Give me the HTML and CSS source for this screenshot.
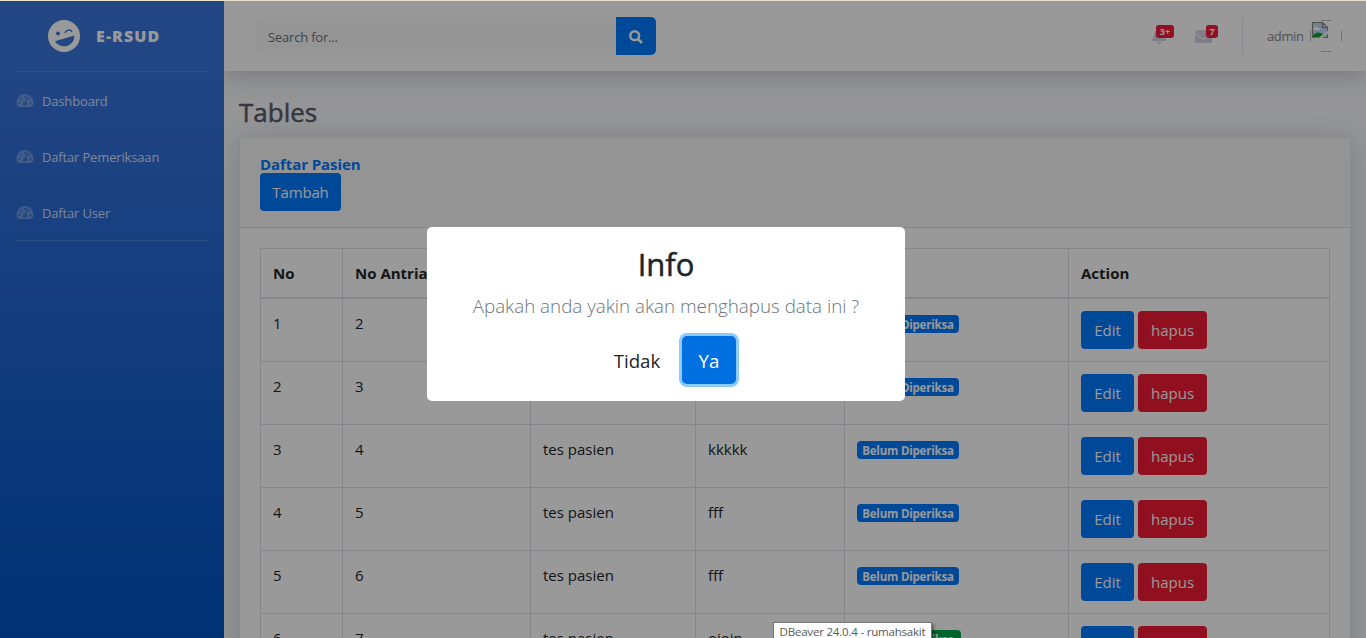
FILE: index.html
```html
<!DOCTYPE html>
<html lang="id">
<head>
<meta charset="utf-8">
<title>E-RSUD - Tables</title>
<link rel="stylesheet" href="styles.css">
</head>
<body>
<svg class="defs" width="0" height="0">
  <symbol id="gauge" viewBox="0 0 576 512"><path fill-rule="evenodd" d="M288 32C128.940 32 0 160.940 0 320c0 52.800 14.250 102.260 39.060 144.800 5.610 9.620 16.300 15.200 27.440 15.200h443c11.140 0 21.830-5.580 27.440-15.200C561.750 422.260 576 372.800 576 320c0-159.060-128.940-288-288-288zm0 64c14.710 0 26.580 10.130 30.320 23.650-1.110 2.260-2.640 4.230-3.450 6.670l-9.220 27.670c-5.130 3.490-10.970 6.010-17.640 6.010-17.670 0-32-14.330-32-32S270.330 96 288 96zM96 384c-17.670 0-32-14.330-32-32s14.330-32 32-32 32 14.330 32 32-14.330 32-32 32zm48-160c-17.670 0-32-14.330-32-32s14.330-32 32-32 32 14.330 32 32-14.330 32-32 32zm246.770-72.410l-61.330 184C343.130 347.330 352 364.540 352 384c0 11.720-3.380 22.550-8.880 32H232.880c-5.500-9.450-8.880-20.280-8.880-32 0-33.940 26.500-61.430 59.900-63.590l61.340-184.010c4.170-12.560 17.730-19.450 30.360-15.170 12.570 4.190 19.350 17.790 15.170 30.360zm14.660 57.200l15.520-46.550c3.470-1.290 7.130-2.230 11.050-2.230 17.670 0 32 14.330 32 32s-14.330 32-32 32c-11.380-.010-20.890-6.280-26.570-15.220zM480 384c-17.670 0-32-14.330-32-32s14.330-32 32-32 32 14.330 32 32-14.330 32-32 32z"/></symbol>
</svg>
<div class="page">
  <aside class="sidebar">
    <a class="brand">
      <svg class="brand-icon" viewBox="0 0 32 32"><circle cx="16" cy="16" r="16" fill="currentColor"/><circle cx="10" cy="13.400" r="2" fill="#3a75dc"/><path d="M17.200 12.400c.7-2.500 4.900-3.200 6.500-1" fill="none" stroke="#3a75dc" stroke-width="1.500" stroke-linecap="round"/><path d="M7.800 20.900 25 15.900c.9-.2 1.200.4 1.200 1.100-.3 4-2.900 7.700-7.200 8.900-4.600 1.200-9.200-.7-11.600-3.900-.4-.6-.1-1 .4-1.100z" fill="#3a75dc"/></svg>
      <span class="brand-text">E-RSUD</span>
    </a>
    <hr class="divider">
    <nav class="nav">
      <a class="nav-link"><svg><use href="#gauge"/></svg><span>Dashboard</span></a>
      <a class="nav-link"><svg><use href="#gauge"/></svg><span>Daftar Pemeriksaan</span></a>
      <a class="nav-link"><svg><use href="#gauge"/></svg><span>Daftar User</span></a>
    </nav>
    <hr class="divider">
  </aside>
  <div class="content">
    <header class="topbar">
      <div class="search"><div class="search-input">Search for...</div><div class="search-btn"><svg viewBox="0 0 14 14"><circle cx="5.700" cy="5.700" r="4.400"/><path d="m9 9 4 4"/></svg></div></div>
      <div class="tools">
        <div class="tool bell"><svg viewBox="0 0 448 512"><path d="M224 512c35.320 0 63.970-28.650 63.970-64H160.030c0 35.350 28.650 64 63.970 64zm215.390-149.710c-19.320-20.760-55.470-51.990-55.470-154.290 0-77.700-54.480-139.900-127.940-155.160V32c0-17.670-14.320-32-31.980-32s-31.980 14.330-31.980 32v20.840C118.560 68.100 64.080 130.300 64.080 208c0 102.300-36.150 133.530-55.470 154.290-6 6.450-8.660 14.160-8.610 21.710.110 16.400 12.980 32 32.100 32h383.800c19.120 0 32-15.600 32.100-32 .050-7.550-2.610-15.270-8.610-21.710z"/></svg><b>3+</b></div>
        <div class="tool mail"><svg viewBox="0 0 512 512"><path d="M502.300 190.800c3.900-3.100 9.700-.2 9.700 4.700V400c0 26.500-21.500 48-48 48H48c-26.500 0-48-21.500-48-48V195.600c0-5 5.700-7.800 9.700-4.700 22.400 17.400 52.100 39.500 154.100 113.600 21.100 15.400 56.700 47.800 92.200 47.600 35.700.3 72-32.800 92.300-47.600 102-74.100 131.600-96.300 154-113.700zM256 320c23.200.4 56.600-29.200 73.400-41.400 132.700-96.300 142.800-104.700 173.400-128.700 5.800-4.500 9.200-11.500 9.200-18.900v-19c0-26.500-21.500-48-48-48H48c-26.500 0-48 21.500-48 48v19c0 7.400 3.400 14.300 9.200 18.900 30.600 23.900 40.700 32.400 173.400 128.700 16.800 12.200 50.200 41.800 73.400 41.400z"/></svg><b>7</b></div>
        <span class="vline"></span>
        <span class="user">admin</span>
        <svg class="avatar" viewBox="0 0 32 32"><path d="M11 .5q5-.8 10 0M11 31.500q5 .8 10 0M.5 11q-.8 5 0 10M31.500 11q.8 5 0 10" fill="none" stroke="#aaa"/><path d="M2 2.500h11l5 5v10H2z" fill="#c3d9f5"/><path d="M2 17.500c2-6 8-6 11-3l-3 3z" fill="#12a030"/><path d="M4 8q2-3 4 0h2v2H3z" fill="#fff"/><path d="M2.500 17.500v-15h10l5 5v3M12.500 2.500v5h5M13 17.500h4.500v-3" fill="none" stroke="#858585" stroke-width="1.200"/><path d="m10 18 8-6" stroke="#fff" stroke-width="2"/></svg>
      </div>
    </header>
    <main class="main">
      <h1>Tables</h1>
      <section class="card">
        <div class="card-head"><h6>Daftar Pasien</h6><a class="btn blue add">Tambah</a></div>
        <div class="card-body">
          <table>
            <colgroup><col class="c1"><col class="c2"><col class="c3"><col class="c4"><col class="c5"><col class="c6"></colgroup>
            <thead><tr><th>No</th><th>No Antrian</th><th></th><th></th><th></th><th>Action</th></tr></thead>
            <tbody>
              <tr><td>1</td><td>2</td><td></td><td></td><td><span class="badge">Belum Diperiksa</span></td><td><div class="actions"><a class="btn blue edit">Edit</a><a class="btn red">hapus</a></div></td></tr>
              <tr><td>2</td><td>3</td><td></td><td></td><td><span class="badge">Belum Diperiksa</span></td><td><div class="actions"><a class="btn blue edit">Edit</a><a class="btn red">hapus</a></div></td></tr>
              <tr><td>3</td><td>4</td><td>tes pasien</td><td>kkkkk</td><td><span class="badge">Belum Diperiksa</span></td><td><div class="actions"><a class="btn blue edit">Edit</a><a class="btn red">hapus</a></div></td></tr>
              <tr><td>4</td><td>5</td><td>tes pasien</td><td>fff</td><td><span class="badge">Belum Diperiksa</span></td><td><div class="actions"><a class="btn blue edit">Edit</a><a class="btn red">hapus</a></div></td></tr>
              <tr><td>5</td><td>6</td><td>tes pasien</td><td>fff</td><td><span class="badge">Belum Diperiksa</span></td><td><div class="actions"><a class="btn blue edit">Edit</a><a class="btn red">hapus</a></div></td></tr>
              <tr><td>6</td><td>7</td><td>tes pasien</td><td>oioin</td><td><span class="badge green">Sudah Diperiksa</span></td><td><div class="actions"><a class="btn blue edit">Edit</a><a class="btn red">hapus</a></div></td></tr>
            </tbody>
          </table>
        </div>
      </section>
    </main>
  </div>
</div>
<div class="overlay">
  <div class="modal">
    <h2>Info</h2>
    <p>Apakah anda yakin akan menghapus data ini ?</p>
    <div class="modal-actions"><button class="no">Tidak</button><button class="yes">Ya</button></div>
  </div>
</div>
<div class="topline"></div>
<div class="tooltip"><span>DBeaver 24.0.4 - rumahsakit</span></div>
</body>
</html>
```
FILE: styles.css
```css
* { box-sizing: border-box; }
html, body { height: 638px; overflow: hidden; }
body { margin: 0; font: 15px/24px "Open Sans", "Noto Sans", sans-serif; color: #212529; }
.defs { position: absolute; }
.page { display: flex; height: 638px; padding-top: 1px; overflow: hidden; }
.sidebar { width: 224px; flex: none; background: linear-gradient(180deg, #3b75dc 0, #3a74dc 10%, #0053c3 100%); }
.brand { display: flex; height: 70px; align-items: center; padding-left: 47px; color: #fff; }
.brand-icon { width: 32px; height: 32px; margin: 0 16px 0 1px; }
.brand-text { font-size: 16px; font-weight: 800; letter-spacing: 1.1px; }
.divider { margin: 0 16px; border: 0; border-top: 1px solid rgba(255,255,255,.15); }
.nav { height: 168px; }
.nav-link { display: flex; height: 56px; padding: 1px 0 0 16px; align-items: center; gap: 8px; color: rgba(255,255,255,.8); font-size: 13px; letter-spacing: -.16px; }
.nav-link svg { width: 18px; height: 15px; fill: rgba(255,255,255,.3); }
.content { flex: 1; min-width: 0; background: #f8f9fc; overflow: hidden; }
.topbar { position: relative; display: flex; height: 70px; justify-content: space-between; align-items: center; padding: 0 24px 0 32px; background: #fff; box-shadow: 0 2px 28px rgba(58,59,69,.3); }
.search { display: flex; width: 400px; height: 38px; border-radius: 5px; overflow: hidden; }
.search-input { flex: 1; padding: 8px 12px; background: #f8f9fa; color: #6e707e; font-size: 13px; letter-spacing: -.2px; }
.search-btn { display: flex; width: 40px; background: #007bff; align-items: center; justify-content: center; }
.search-btn svg { width: 14px; margin-top: 1px; fill: none; stroke: #fff; stroke-width: 2.500; }
.tools { display: flex; align-items: center; height: 70px; }
.tool { position: relative; display: flex; width: 43px; height: 16px; color: #d1d3e2; }
.tool svg { height: 16px; fill: currentColor; }
.bell svg { width: 14px; }
.mail { width: 47px; }
.mail svg { width: 17px; height: 17px; }
.tool b { position: absolute; left: 4px; top: -3px; width: 18px; height: 13px; border-radius: 3px; background: #f21c37; color: #fff; font-size: 9px; line-height: 13px; text-align: center; }
.mail b { left: 11px; width: 12px; }
.vline { width: 1px; height: 38px; background: #e3e6f0; margin-right: 24px; }
.user { width: 43px; color: #858796; font-size: 13px; letter-spacing: -.4px; }
.avatar { width: 32px; height: 32px; }
.main { padding: 23px 15px 0; }
h1 { margin: 0; height: 43px; font-size: 26px; line-height: 36px; font-weight: 500; color: #5a5c69; -webkit-text-stroke: .5px #5a5c69; }
.card { width: 1112px; border: 1px solid #e3e6f0; border-radius: 5px; background: #fff; box-shadow: 0 2px 28px rgba(58,59,69,.2); }
.card-head { height: 90px; padding: 17px 20px; background: #f7f7f7; border-bottom: 1px solid #dfdfdf; }
h6 { margin: 0; font-size: 15px; line-height: 18px; font-weight: 700; color: #007bff; letter-spacing: -.08px; }
.btn { display: inline-flex; width: 69px; height: 38px; align-items: center; justify-content: center; border-radius: 4px; color: #fff; }
.blue { background: #007bff; }
.red { background: #f01c36; }
.add { width: 81px; letter-spacing: -.15px; }
.edit { width: 53px; }
.card-body { padding: 20px; }
table { width: 1069px; table-layout: fixed; border-collapse: collapse; }
.c1 { width: 82px; } .c2 { width: 188px; } .c3 { width: 165px; } .c4 { width: 149px; } .c5 { width: 224px; } .c6 { width: 261px; }
th, td { height: 63px; padding: 12px; border: 1px solid #dee2e6; text-align: left; vertical-align: top; white-space: nowrap; }
th { height: 49px; border-bottom-width: 2px; font-weight: 700; }
.actions { display: flex; gap: 4px; }
.badge { display: block; width: 102px; height: 18px; margin-top: 4px; border-radius: 4px; background: #007bff; color: #fff; font-size: 11.500px; font-weight: 700; line-height: 19px; text-align: center; letter-spacing: -.2px; }
.green { width: 104px; background: #00ab4e; }
.overlay { position: absolute; inset: 0; background: rgba(0,0,0,.4); }
.modal { position: absolute; left: 427px; top: 227px; width: 478px; height: 174px; padding: 18px 16px 16px; border-radius: 5px; background: #fff; text-align: center; }
h2 { margin: 0; font-size: 31px; line-height: 38px; font-weight: 500; -webkit-text-stroke: .5px #212529; }
.modal p { margin: 8px 0 15px; color: #6c757d; font-size: 18.800px; line-height: 30px; font-weight: 300; white-space: nowrap; }
.modal-actions { display: flex; justify-content: center; gap: 4px; }
button { height: 48px; padding: 2px 0 0; border: 0; border-radius: 5px; font: 18.700px/30px "Open Sans", sans-serif; }
.no { width: 82px; background: transparent; color: #212529; }
.yes { width: 54px; background: #006fe0; color: #fff; box-shadow: 0 0 0 3px #8ccaff; }
.topline { position: absolute; top: 0; left: 0; width: 100%; height: 1px; background: #e9e4cf; }
.tooltip { position: absolute; left: 773px; top: 622px; width: 159px; height: 20px; border: 1px solid #767676; background: #fff; box-shadow: 2px 2px 3px rgba(0,0,0,.4); color: #575757; font-size: 11.500px; line-height: 18px; text-align: center; white-space: nowrap; letter-spacing: -.2px; }
```
